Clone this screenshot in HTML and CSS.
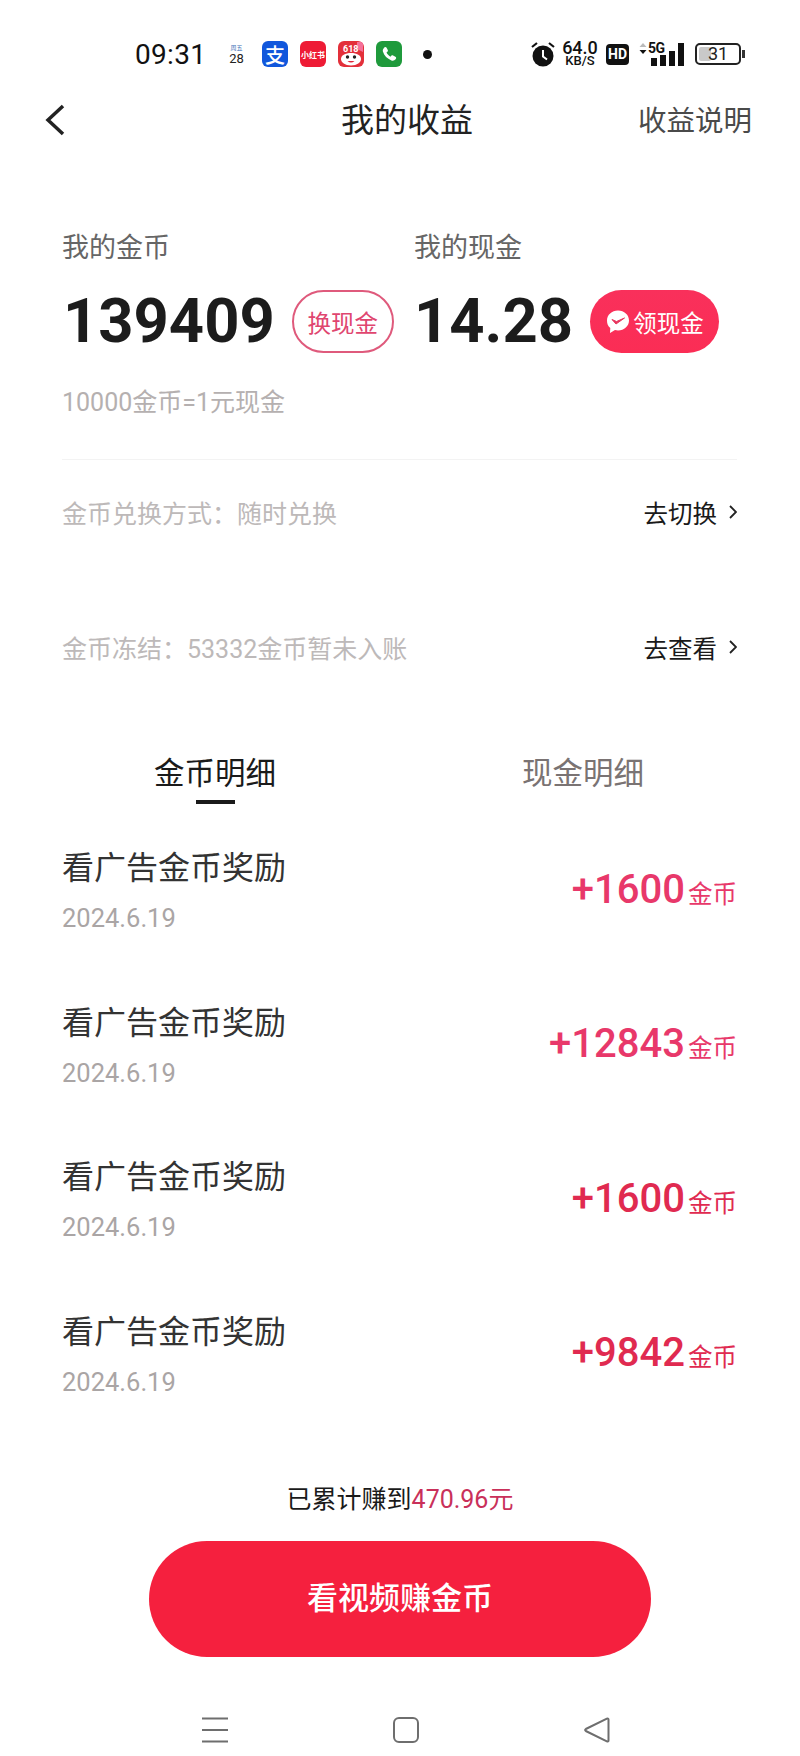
FILE: index.html
```html
<!DOCTYPE html>
<html lang="zh-CN">

<head>
    <meta charset="UTF-8">
    <meta name="viewport" content="width=device-width, initial-scale=1.0">
    <title>我的收益</title>
    <link rel="stylesheet" href="styles.css">
</head>

<body>
    <div class="page">
        <!-- status bar -->
        <div class="status">
            <span class="time">09:31</span>
            <div class="cal"><span class="cal-day">周五</span><span class="cal-num">28</span></div>
            <div class="app app-ali">支</div>
            <div class="app app-xhs">小红书</div>
            <div class="app app-618">
                <svg width="26" height="26" viewBox="0 0 26 26">
                    <path d="M3 18c0-3.500 4-6 10-6s10 2.500 10 6-4 6.500-10 6.500S3 21.500 3 18z" fill="#fff"/>
                    <circle cx="9.500" cy="16" r="1.700" fill="#222"/>
                    <circle cx="16.500" cy="16" r="1.700" fill="#222"/>
                    <path d="M9.500 20c2.300 2 4.700 2 7 0z" fill="#e0263a"/>
                    <path d="M19 1h6v10l-6-3z" fill="#f5709a"/>
                    <text x="5" y="11" class="app-618-text">618</text>
                </svg>
            </div>
            <div class="app app-phone">
                <svg width="26" height="26" viewBox="0 0 26 26">
                    <path d="M8 6.500c1-.8 2-.8 2.600.2l1.200 2.300c.3.700.2 1.300-.4 1.800l-.9.800c.8 1.700 2.200 3.200 3.900 4.100l.9-.9c.5-.5 1.200-.6 1.800-.3l2.300 1.300c1 .6 1 1.600.2 2.500-1.100 1.300-2.600 1.700-4.200 1.100-4.200-1.500-7.200-4.700-8.500-8.800-.4-1.600.2-2.900 1.400-3.900z" fill="#fff"/>
                </svg>
            </div>
            <span class="dot"></span>

            <div class="status-right">
                <svg class="alarm" width="24" height="26" viewBox="0 0 24 26">
                    <circle cx="12" cy="15" r="10.500" fill="#111"/>
                    <path d="M12 9v6.500l4 3" stroke="#fff" stroke-width="2" fill="none"/>
                    <path d="M1 6l5-4M23 6l-5-4" stroke="#111" stroke-width="2.200"/>
                </svg>
                <div class="speed"><span class="speed-num">64.0</span><span class="speed-unit">KB/S</span></div>
                <div class="hd">HD</div>
                <div class="signal">
                    <svg class="signal-arrows" width="8" height="12" viewBox="0 0 8 12">
                        <path d="M4 0l3.500 4h-7z" fill="#bbb"/>
                        <path d="M4 11l3.500-4h-7z" fill="#111"/>
                    </svg>
                    <span class="signal-5g">5G</span>
                    <div class="bars">
                        <span class="bar bar-1"></span>
                        <span class="bar bar-2"></span>
                        <span class="bar bar-3"></span>
                        <span class="bar bar-4"></span>
                    </div>
                </div>
                <div class="battery">
                    <div class="battery-body"><span class="battery-fill"></span><span class="battery-num">31</span></div>
                    <span class="battery-nub"></span>
                </div>
            </div>
        </div>

        <!-- header -->
        <div class="header">
            <svg class="back" width="22" height="32" viewBox="0 0 22 32">
                <path d="M19 2L4 16l15 14" stroke="#222" stroke-width="3.500" fill="none"/>
            </svg>
            <div class="title">我的收益</div>
            <div class="explain">收益说明</div>
        </div>

        <!-- balances -->
        <div class="wallet">
            <div class="wallet-col wallet-coin">
                <div class="wallet-label">我的金币</div>
                <div class="wallet-value">
                    <span class="num">139409</span>
                    <span class="pill pill-line">换现金</span>
                </div>
            </div>
            <div class="wallet-col">
                <div class="wallet-label">我的现金</div>
                <div class="wallet-value">
                    <span class="num num-cash">14.28</span>
                    <span class="pill pill-fill">
                        <svg width="25" height="25" viewBox="0 0 25 25">
                            <path d="M13 1.500c6.200 0 11 4.400 11 10s-4.800 10-11 10c-1 0-2-.1-3-.4L5 24l.3-5C2.900 17.200 2 14.500 2 11.500c0-5.600 4.800-10 11-10z" fill="#fff"/>
                            <path d="M7 10.500l4 4.500 8.500-6-8 3.500z" stroke="#e8365f" stroke-width="1" fill="#e8365f"/>
                        </svg>
                        领现金
                    </span>
                </div>
            </div>
        </div>
        <div class="rate">10000金币=1元现金</div>
        <div class="divider"></div>

        <!-- links -->
        <div class="link-row link-row-first">
            <span class="link-text">金币兑换方式：随时兑换</span>
            <span class="link-go">去切换
                <svg width="8" height="16" viewBox="0 0 8 16"><path d="M1 2l6 6-6 6" stroke="#222" stroke-width="1.800" fill="none"/></svg>
            </span>
        </div>
        <div class="link-row link-row-second">
            <span class="link-text">金币冻结：53332金币暂未入账</span>
            <span class="link-go">去查看
                <svg width="8" height="16" viewBox="0 0 8 16"><path d="M1 2l6 6-6 6" stroke="#222" stroke-width="1.800" fill="none"/></svg>
            </span>
        </div>

        <!-- tabs -->
        <div class="tabs">
            <div class="tab tab-on">金币明细<span class="tab-line"></span></div>
            <div class="tab">现金明细</div>
        </div>

        <!-- records -->
        <div class="list">
            <div class="item">
                <div>
                    <div class="item-name">看广告金币奖励</div>
                    <div class="item-date">2024.6.19</div>
                </div>
                <div class="item-amount">+1600<span class="item-unit">金币</span></div>
            </div>
            <div class="item">
                <div>
                    <div class="item-name">看广告金币奖励</div>
                    <div class="item-date">2024.6.19</div>
                </div>
                <div class="item-amount">+12843<span class="item-unit">金币</span></div>
            </div>
            <div class="item">
                <div>
                    <div class="item-name">看广告金币奖励</div>
                    <div class="item-date">2024.6.19</div>
                </div>
                <div class="item-amount item-amount-deep">+1600<span class="item-unit">金币</span></div>
            </div>
            <div class="item">
                <div>
                    <div class="item-name">看广告金币奖励</div>
                    <div class="item-date">2024.6.19</div>
                </div>
                <div class="item-amount item-amount-deep">+9842<span class="item-unit">金币</span></div>
            </div>
        </div>

        <div class="total">已累计赚到<span class="total-num">470.96元</span></div>
        <div class="watch">看视频赚金币</div>

        <!-- system nav -->
        <div class="nav">
            <svg width="26" height="26" viewBox="0 0 26 26">
                <path d="M0 1.500h26M0 13h26M0 24.500h26" stroke="#6e6e6e" stroke-width="2" fill="none"/>
            </svg>
            <svg width="26" height="26" viewBox="0 0 26 26">
                <rect x="1" y="1" width="24" height="24" rx="5" stroke="#6e6e6e" stroke-width="2" fill="none"/>
            </svg>
            <svg width="26" height="26" viewBox="0 0 26 26">
                <path d="M24.500 2.500v21c0 1-.8 1.300-1.600.9L1.800 14c-.9-.5-.9-1.500 0-2L22.900 1.600c.8-.4 1.600-.1 1.600.9z" stroke="#6e6e6e" stroke-width="2" fill="none"/>
            </svg>
        </div>
    </div>
</body>

</html>
```

FILE: styles.css
```css
* {
    box-sizing: border-box;
}

body {
    margin: 0;
    background-color: #fff;
    font-family: Roboto, "Noto Sans CJK SC", sans-serif;
    color: #1a1a1a;
}

.page {
    width: 800px;
    height: 1756px;
    overflow: hidden;
}

/* status bar */
.status {
    display: flex;
    align-items: center;
    height: 92px;
    padding: 16px 55px 0 135px;
}

.time {
    width: 95px;
    font-size: 28px;
    color: #111;
    letter-spacing: 0.3px;
}

.cal {
    display: flex;
    flex-direction: column;
    align-items: center;
    width: 13px;
    margin-right: 19px;
}

.cal-day {
    font-size: 6px;
    line-height: 8px;
    color: #3a6fb5;
    white-space: nowrap;
}

.cal-num {
    font-size: 13px;
    line-height: 13px;
    color: #222;
}

.app {
    display: flex;
    align-items: center;
    justify-content: center;
    width: 26px;
    height: 26px;
    margin-right: 12px;
    border-radius: 6px;
    overflow: hidden;
}

.app-ali {
    background-color: #1157dc;
    color: #fff;
    font-size: 20px;
    font-weight: 500;
}

.app-xhs {
    background-color: #ee1b35;
    color: #fff;
    font-size: 8px;
    font-weight: 700;
    white-space: nowrap;
}

.app-618 {
    background-color: #e3303a;
}

.app-618-text {
    font-size: 9px;
    font-weight: 700;
    fill: #fff;
}

.app-phone {
    background-color: #1f9a3c;
}

.dot {
    width: 9px;
    height: 9px;
    margin-left: 9px;
    border-radius: 50%;
    background-color: #111;
}

.status-right {
    display: flex;
    align-items: center;
    margin-left: auto;
}

.alarm {
    margin-right: 6px;
}

.speed {
    display: flex;
    flex-direction: column;
    align-items: center;
    width: 38px;
    margin-right: 7px;
    color: #111;
}

.speed-num {
    font-size: 18px;
    line-height: 14px;
    font-weight: 500;
}

.speed-unit {
    font-size: 13px;
    line-height: 12px;
    font-weight: 500;
}

.hd {
    width: 23px;
    height: 21px;
    margin-right: 10px;
    border-radius: 4px;
    background-color: #111;
    color: #fff;
    font-size: 14px;
    line-height: 21px;
    font-weight: 700;
    text-align: center;
}

.signal {
    position: relative;
    width: 45px;
    height: 23px;
    margin-right: 11px;
}

/* the arrows and 5G sit on top of the signal bars */
.signal-arrows {
    position: absolute;
    left: 0;
    top: 0;
}

.signal-5g {
    position: absolute;
    left: 9px;
    top: -2px;
    font-size: 14px;
    line-height: 14px;
    font-weight: 700;
    letter-spacing: -0.5px;
    color: #111;
}

.bars {
    display: flex;
    align-items: flex-end;
    gap: 3px;
    justify-content: flex-end;
    height: 23px;
}

.bar {
    width: 6px;
    background-color: #111;
}

.bar-1 {
    height: 8px;
}

.bar-2 {
    height: 11px;
}

.bar-3 {
    height: 15px;
}

.bar-4 {
    height: 23px;
}

.battery {
    display: flex;
    align-items: center;
    gap: 1px;
}

.battery-body {
    position: relative;
    width: 46px;
    height: 22px;
    padding: 2px;
    border: 2px solid #222;
    border-radius: 5px;
}

.battery-fill {
    display: block;
    width: 12px;
    height: 14px;
    border-radius: 2px;
    background-color: #c9c9c9;
}

.battery-num {
    position: absolute;
    left: 0;
    right: 0;
    top: 0;
    font-size: 18px;
    line-height: 18px;
    text-align: center;
    color: #222;
}

.battery-nub {
    width: 3px;
    height: 8px;
    background-color: #333;
}

/* header */
.header {
    display: flex;
    align-items: center;
    height: 56px;
    padding: 0 48px 0 44px;
    margin-top: -2px;
}

.back {
    width: 22px;
    margin-top: 4px;
}

.title {
    flex: 1;
    padding-left: 110px;
    font-size: 33px;
    text-align: center;
    color: #222;
}

.explain {
    font-size: 28.500px;
    color: #4a4a4a;
}

/* balances */
.wallet {
    display: flex;
    margin-top: 82px;
    padding-left: 62px;
}

.wallet-coin {
    width: 352px;
}

.wallet-label {
    font-size: 27px;
    line-height: 40px;
    color: #666;
}

.wallet-value {
    display: flex;
    align-items: center;
    margin-top: 22px;
}

.num {
    font-size: 61.500px;
    line-height: 61px;
    font-weight: 700;
    color: #1c1c1c;
    margin-left: 1px;
}

.num-cash {
    margin-left: 0;
}

.pill {
    display: flex;
    align-items: center;
    justify-content: center;
    height: 63px;
    border-radius: 32px;
    font-size: 23.500px;
}

.pill-line {
    width: 102px;
    margin-left: 17px;
    border: 2px solid #df5a7c;
    color: #e0466f;
}

.pill-fill {
    width: 129px;
    margin-left: 17px;
    gap: 3px;
    background: linear-gradient(180deg, #f9305b, #fb2d55);
    color: #fff;
}

.rate {
    margin-top: 32px;
    padding-left: 62px;
    font-size: 25px;
    line-height: 36px;
    color: #b5b0b0;
}

.divider {
    height: 1px;
    margin: 38px 63px 0 62px;
    background-color: #f3f3f3;
}

/* link rows */
.link-row {
    display: flex;
    align-items: center;
    justify-content: space-between;
    height: 60px;
    padding: 0 63px 0 62px;
}

.link-row-first {
    margin-top: 22px;
}

.link-row-second {
    margin-top: 75px;
}

.link-text {
    font-size: 25px;
    color: #bdb9b9;
}

.link-go {
    display: flex;
    align-items: center;
    gap: 12px;
    font-size: 24.500px;
    color: #1a1a1a;
}

/* tabs */
.tabs {
    display: grid;
    grid-template-columns: 1fr 1fr;
    margin-top: 72px;
    padding: 0 33px 0 31px;
}

.tab {
    display: flex;
    flex-direction: column;
    align-items: center;
    height: 55px;
    font-size: 30.500px;
    line-height: 50px;
    color: #7a7373;
}

.tab-on {
    color: #1a1a1a;
}

.tab-line {
    width: 39px;
    height: 4px;
    margin-top: 1px;
    background-color: #1a1a1a;
}

/* records */
.list {
    display: flex;
    flex-direction: column;
    gap: 64.600px;
    margin-top: 42px;
    padding: 0 63px 0 62px;
}

.item {
    display: flex;
    align-items: center;
    justify-content: space-between;
    height: 90px;
}

.item-name {
    font-size: 32px;
    line-height: 44px;
    color: #333;
}

.item-date {
    margin-top: 10px;
    font-size: 25.500px;
    line-height: 36px;
    color: #aaa5a5;
}

.item-amount {
    margin-top: -4px;
    font-size: 40px;
    font-weight: 500;
    color: #e8386a;
}

.item-amount-deep {
    color: #e02a50;
}

.item-unit {
    margin-left: 3px;
    font-size: 24.500px;
    font-weight: 400;
}

/* bottom */
.total {
    margin-top: 80px;
    font-size: 25px;
    line-height: 40px;
    text-align: center;
    color: #1a1a1a;
}

.total-num {
    color: #c9305a;
}

.watch {
    width: 502px;
    height: 116px;
    margin: 21px auto 0;
    border-radius: 58px;
    background-color: #f5203e;
    font-size: 31px;
    font-weight: 500;
    line-height: 116px;
    text-align: center;
    color: #fff;
}

.nav {
    display: flex;
    gap: 165px;
    margin-top: 60px;
    padding-left: 202px;
}
```
